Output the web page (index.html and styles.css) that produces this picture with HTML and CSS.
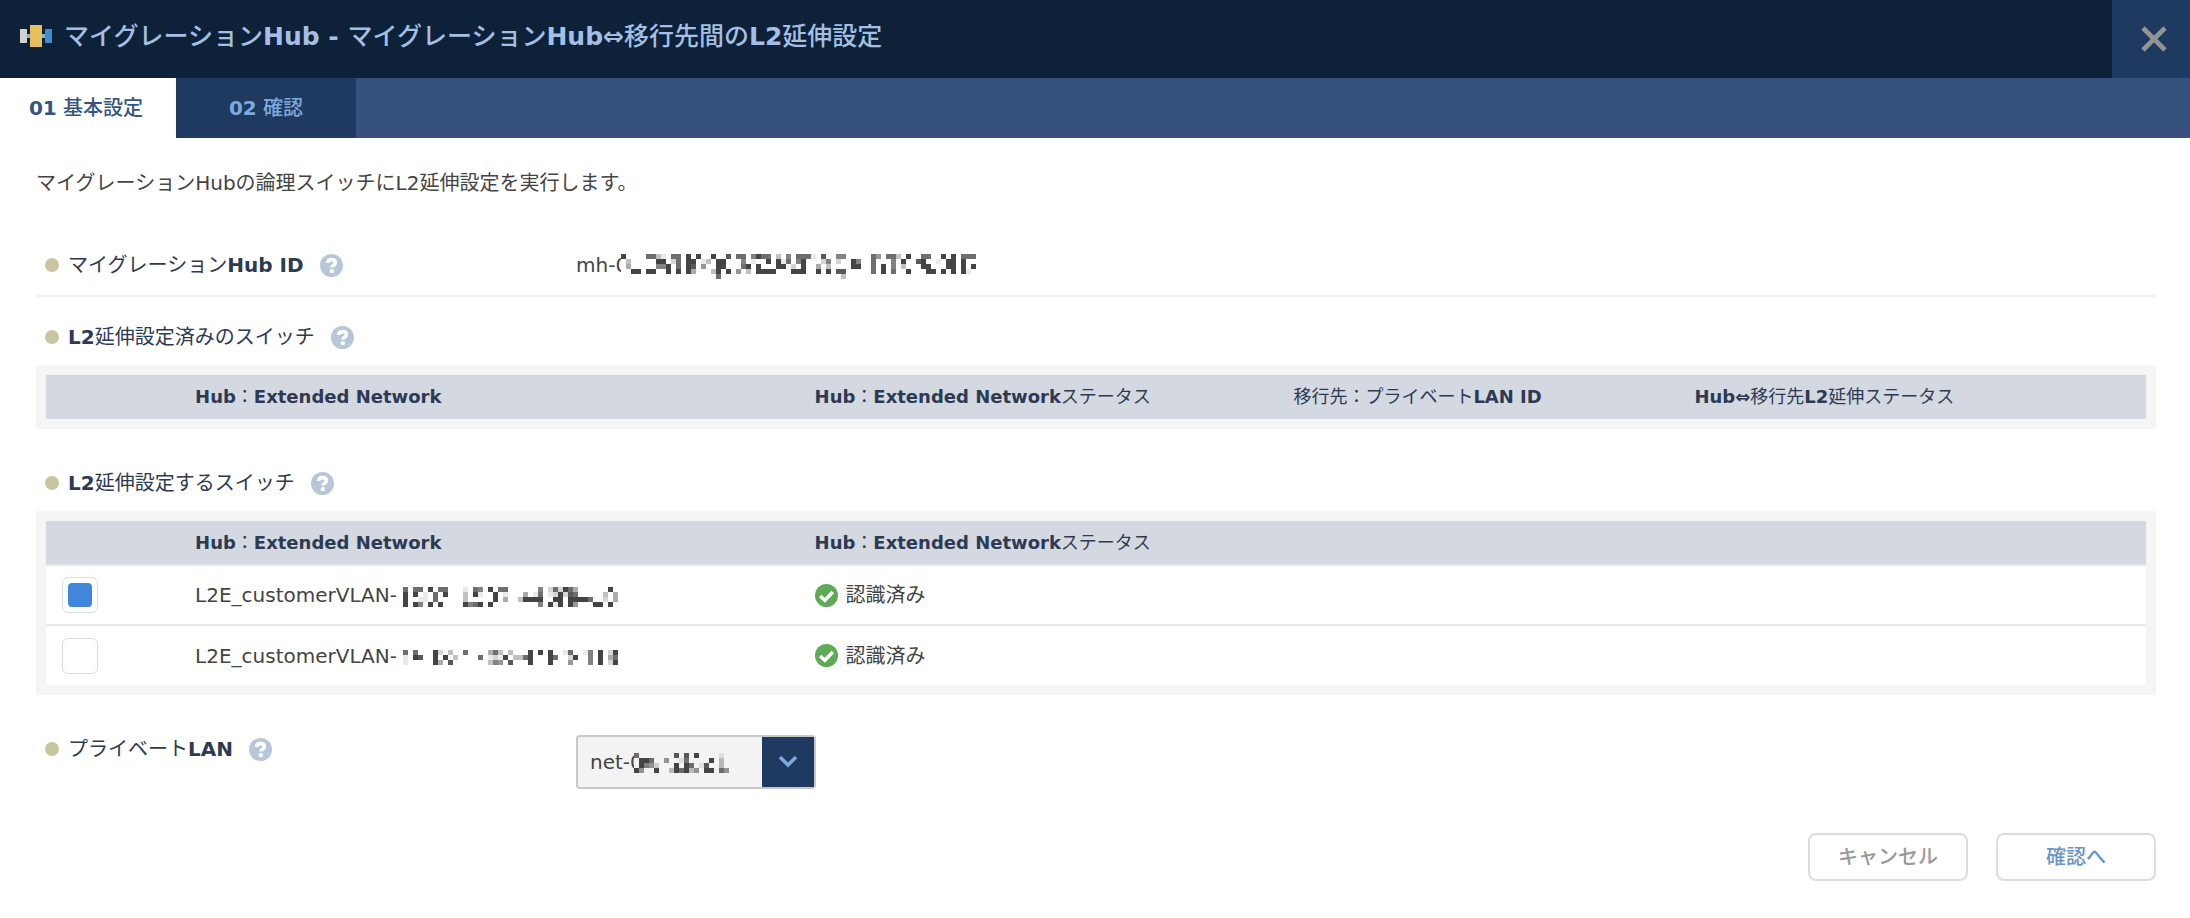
FILE: index.html
```html
<!DOCTYPE html>
<html lang="ja">
<head>
    <meta charset="UTF-8">
    <meta name="viewport" content="width=device-width, initial-scale=1.0">
    <title>マイグレーションHub</title>
    <link rel="stylesheet" href="styles.css">
</head>
<body>
    <svg class="defs" aria-hidden="true">
        <symbol id="help" viewBox="0 0 24 24">
            <circle cx="12" cy="12" r="12" fill="#b8c6d9"/>
            <path d="M7.8 9.4C8 7 9.7 5.8 12 5.8c2.4 0 4 1.3 4 3.2 0 2.8-3.5 2.8-3.5 5.2" fill="none" stroke="#fff" stroke-width="3.8"/>
            <rect x="10.2" y="15.8" width="4.2" height="4" rx="1" fill="#fff"/>
        </symbol>
        <symbol id="check" viewBox="0 0 24 24">
            <circle cx="12" cy="12" r="12" fill="#5eaa55"/>
            <path d="M5.4 12.4l4.9 4.6 8.3-8.6" fill="none" stroke="#fff" stroke-width="3.6"/>
        </symbol>
    </svg>

    <header class="header">
        <svg class="logo" viewBox="0 0 32 24" aria-hidden="true">
            <rect x="6" y="10" width="20" height="4" fill="#7fb2e0"/>
            <rect x="0" y="5" width="7" height="14" fill="#d2cfcf"/>
            <rect x="25" y="5" width="7" height="14" fill="#418dcb"/>
            <rect x="10" y="1" width="12" height="22" fill="#e5c05c"/>
        </svg>
        <h1>マイグレーション<b>Hub - </b>マイグレーション<b>Hub⇔</b>移行先間の<b>L2</b>延伸設定</h1>
        <button class="close" type="button" aria-label="閉じる">
            <svg viewBox="0 0 26 26"><path d="M2 2l22 22M24 2L2 24" fill="none" stroke="#949494" stroke-width="4.6"/></svg>
        </button>
    </header>

    <nav class="tabs">
        <a class="tab active" href="#basic"><b>01</b> 基本設定</a>
        <a class="tab" href="#confirm"><b>02</b> 確認</a>
    </nav>

    <main class="content">
        <p class="lead">マイグレーションHubの論理スイッチにL2延伸設定を実行します。</p>

        <div class="row">
            <div class="label">
                <span>マイグレーション<b>Hub ID</b></span>
                <svg class="icon help"><use href="#help"/></svg>
            </div>
            <div class="value">mh-0<svg class="mosaic" data-rows="9....7731.77.9.9..9..8.77.6977.3.6.7771.8..66.....75.773.9..77..9.9.777
.3.....99.27.99.13.99...6.1..9.917.69...26.2..96..7...6.9..89..1.99.9..
.4.....669.7.98.5..99...79.9...99.2.9..4.3....99..7.9.6.3...99...99.9.9
..99.99..9.9.94...39.9.5.3.9999...999..9.9.88.....7.9.7..9...99.9.9.91.
...................7........................3.........................."></svg></div>
        </div>

        <section class="block">
            <h2 class="label">
                <span><b>L2</b>延伸設定済みのスイッチ</span>
                <svg class="icon help"><use href="#help"/></svg>
            </h2>
            <div class="frame">
                <table>
                    <thead>
                        <tr>
                            <th class="col-check"></th>
                            <th class="col-network"><b>Hub</b>：<b>Extended Network</b></th>
                            <th class="col-status"><b>Hub</b>：<b>Extended Network</b>ステータス</th>
                            <th class="col-lan">移行先：プライベート<b>LAN ID</b></th>
                            <th><b>Hub⇔</b>移行先<b>L2</b>延伸ステータス</th>
                        </tr>
                    </thead>
                </table>
            </div>
        </section>

        <section class="block target">
            <h2 class="label">
                <span><b>L2</b>延伸設定するスイッチ</span>
                <svg class="icon help"><use href="#help"/></svg>
            </h2>
            <div class="frame">
                <table>
                    <thead>
                        <tr>
                            <th class="col-check"></th>
                            <th class="col-network"><b>Hub</b>：<b>Extended Network</b></th>
                            <th><b>Hub</b>：<b>Extended Network</b>ステータス</th>
                        </tr>
                    </thead>
                    <tbody>
                        <tr>
                            <td class="check-cell"><input type="checkbox" id="vlan1" checked></td>
                            <td><label class="vlan" for="vlan1">L2E_customerVLAN-<svg class="mosaic" data-rows="7.77.9.77...1.76.9.77......6.272974......9.
9.9.1.7.9...3.91..9.1...4.17.129287.....3.4
9..11.7.....3.....9.4..39999..99.99997..2.4
9.96.9.9....9679.9.........6.919.95...99.9."></svg></label></td>
                            <td><span class="status"><svg class="icon"><use href="#check"/></svg>認識済み</span></td>
                        </tr>
                        <tr>
                            <td class="check-cell"><input type="checkbox" id="vlan2"></td>
                            <td><label class="vlan" for="vlan2">L2E_customerVLAN-<svg class="mosaic" data-rows="7.7...92.3..7....473.3...9.9.9..17..16.9.29
1.98..9.9.3....7.1219.3379...97..29..6.9.47
1.....94.8.......365.8...9...9...5...6.9.29"></svg></label></td>
                            <td><span class="status"><svg class="icon"><use href="#check"/></svg>認識済み</span></td>
                        </tr>
                    </tbody>
                </table>
            </div>
        </section>

        <div class="row lan-row">
            <div class="label">
                <label for="lan">プライベート<b>LAN</b></label>
                <svg class="icon help"><use href="#help"/></svg>
            </div>
            <div class="select">
                <select id="lan">
                    <option>net-0</option>
                </select>
                <svg class="mosaic" data-rows="7.......8.8.9....1.
.997..5..17....9.3.
.9652...9.97.18..3.
95..9..397935.99.75"></svg>
                <span class="arrow"><svg viewBox="0 0 20 14"><path d="M2 2l8 8 8-8" fill="none" stroke="#7da9dc" stroke-width="3.6"/></svg></span>
            </div>
        </div>

        <div class="actions">
            <button class="button cancel" type="button">キャンセル</button>
            <button class="button next" type="button">確認へ</button>
        </div>
    </main>

    <script src="mosaic.js"></script>
</body>
</html>
```
FILE: styles.css
```css
* {
    box-sizing: border-box;
}

body {
    margin: 0;
    background-color: #fff;
    color: #444;
    font-family: "DejaVu Sans", "Noto Sans CJK JP", sans-serif;
    font-size: 20px;
    line-height: 28px;
}

.defs {
    display: none;
}

.header {
    display: flex;
    align-items: stretch;
    height: 78px;
    padding-left: 20px;
    background-color: #0d2139;
    color: #a4bfe3;
}

.logo {
    width: 32px;
    height: 24px;
    margin-top: 24px;
    margin-right: 12px;
}

h1 {
    flex: 1;
    margin: 0;
    font-size: 25px;
    font-weight: 500;
    line-height: 74px;
}

.close {
    display: flex;
    align-items: center;
    justify-content: center;
    width: 78px;
    padding: 0 0 0 6px;
    border: none;
    background-color: #1e3a60;
    cursor: pointer;
}

.close svg {
    width: 26px;
    height: 26px;
}

.tabs {
    display: flex;
    background-color: #36517e;
}

.tab {
    min-width: 180px;
    padding: 0 28px;
    background-color: #1e3a60;
    color: #7ea9dc;
    font-weight: 500;
    line-height: 60px;
    text-align: center;
    text-decoration: none;
}

.tab.active {
    min-width: 176px;
    padding: 0 30px 0 26px;
    background-color: #fff;
    color: #36547f;
}

.content {
    padding: 31px 34px 36px 36px;
}

.lead {
    margin: 0;
    line-height: 28px;
}

.row {
    display: flex;
    align-items: center;
    margin-top: 38px;
    padding: 16px 0;
    border-bottom: 2px solid #edf2f7;
}

.row .label {
    width: 540px;
}

.label {
    display: flex;
    align-items: center;
    margin: 0;
    padding-left: 9px;
    color: #2c3a53;
    font-size: 20px;
    font-weight: 400;
}

.label::before {
    content: "";
    width: 14px;
    height: 14px;
    margin-right: 9px;
    border-radius: 50%;
    background-color: #c9c5a1;
}

.icon {
    width: 23px;
    height: 23px;
}

.help {
    margin-left: 16px;
}

.mosaic {
    vertical-align: middle;
    fill: #444;
}

.value .mosaic {
    margin-left: -7px;
    background-color: #fff;
}

.vlan .mosaic {
    margin-left: 6px;
}

.block {
    margin-top: 26px;
}

.target {
    margin-top: 40px;
}

.frame {
    margin-top: 14px;
    padding: 10px;
    background-color: #f5f5f5;
}

table {
    width: 100%;
    border-collapse: collapse;
    table-layout: fixed;
    background-color: #fff;
}

th {
    height: 44px;
    padding: 0;
    background-color: #d4d8e0;
    color: #2c3a53;
    font-size: 18px;
    font-weight: 400;
    text-align: left;
}

td {
    height: 60px;
    padding: 0;
    border-top: 2px solid #e8e8e8;
}

.col-check {
    width: 7.1%;
}

.col-network {
    width: 29.5%;
}

.col-status {
    width: 22.8%;
}

.col-lan {
    width: 19.1%;
}

.check-cell {
    padding-left: 16px;
}

input[type="checkbox"] {
    display: block;
    width: 36px;
    height: 36px;
    margin: 0;
    padding: 5px;
    border: 1px solid #ddd;
    border-radius: 6px;
    background-color: #fff;
    appearance: none;
}

input[type="checkbox"]:checked::before {
    content: "";
    display: block;
    width: 24px;
    height: 24px;
    border-radius: 4px;
    background-color: #4286dc;
}

.status {
    display: flex;
    align-items: center;
    gap: 8px;
}

.lan-row {
    align-items: flex-start;
    margin-top: 40px;
    padding: 0;
    border-bottom: none;
}

.select {
    position: relative;
    width: 240px;
}

select {
    display: block;
    width: 100%;
    height: 54px;
    padding: 0 54px 0 12px;
    border: 2px solid #c8c8c8;
    border-radius: 4px;
    background-color: #f3f3f3;
    color: #444;
    font: inherit;
    appearance: none;
}

.select .mosaic {
    position: absolute;
    top: 18px;
    left: 58px;
    background-color: #f3f3f3;
    pointer-events: none;
}

.arrow {
    position: absolute;
    top: 2px;
    right: 2px;
    bottom: 2px;
    display: flex;
    align-items: center;
    justify-content: center;
    width: 52px;
    background-color: #1e3a60;
    pointer-events: none;
}

.arrow svg {
    width: 20px;
    height: 14px;
}

.actions {
    display: flex;
    justify-content: flex-end;
    gap: 28px;
    margin-top: 44px;
}

.button {
    width: 160px;
    height: 48px;
    border: 2px solid #ddd;
    border-radius: 8px;
    background-color: #fff;
    font: inherit;
    font-weight: 500;
    cursor: pointer;
}

.cancel {
    color: #999;
}

.next {
    color: #6894c8;
}
```
FILE: mosaic.js
```js
// data-rows: one character per 5px block, 1 (light) to 9 (dark)
const size = 5;

document.querySelectorAll('.mosaic').forEach(function (svg) {
    const rows = svg.dataset.rows.split('\n');
    svg.setAttribute('width', rows[0].length * size);
    svg.setAttribute('height', rows.length * size);

    rows.forEach(function (row, y) {
        row.split('').forEach(function (shade, x) {
            if (!(shade > 0)) {
                return;
            }
            const rect = document.createElementNS('http://www.w3.org/2000/svg', 'rect');
            rect.setAttribute('x', x * size);
            rect.setAttribute('y', y * size);
            rect.setAttribute('width', size);
            rect.setAttribute('height', size);
            rect.setAttribute('opacity', shade / 9);
            svg.appendChild(rect);
        });
    });
});
```
